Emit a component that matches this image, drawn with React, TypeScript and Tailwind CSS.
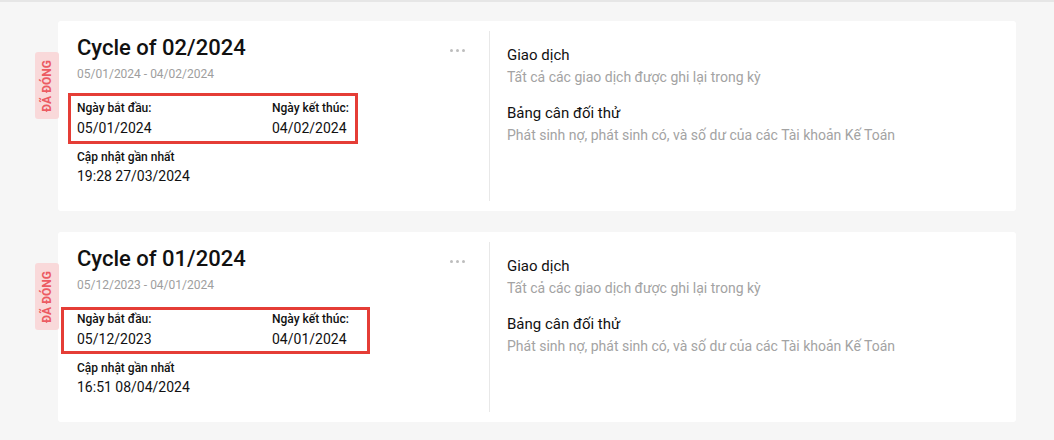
type Cycle = {
  title: string;
  range: string;
  start: string;
  end: string;
  updated: string;
  box: string;
};

const cycles: Cycle[] = [
  {
    title: 'Cycle of 02/2024',
    range: '05/01/2024 - 04/02/2024',
    start: '05/01/2024',
    end: '04/02/2024',
    updated: '19:28 27/03/2024',
    box: 'left-[10px] top-[72px] w-[290px] h-[51px]',
  },
  {
    title: 'Cycle of 01/2024',
    range: '05/12/2023 - 04/01/2024',
    start: '05/12/2023',
    end: '04/01/2024',
    updated: '16:51 08/04/2024',
    box: 'left-[3px] top-[75px] w-[309px] h-[47px]',
  },
];

function CycleCard({ c }: { c: Cycle }) {
  return (
    <div className="relative flex h-[190px] w-full rounded-[3px] bg-white">
      {/* badge trạng thái */}
      <div className="absolute -left-[23px] top-[31px] flex h-[67px] w-[24px] items-center justify-center rounded-[3px] bg-[#f9d9da]">
        <span className="-rotate-90 whitespace-nowrap text-[12px] font-bold text-[#ec5b62]">
          ĐÃ ĐÓNG
        </span>
      </div>

      {/* khung đỏ */}
      <div className={`pointer-events-none absolute border-[3px] border-[#e53d36] ${c.box}`} />

      <div className="relative w-[431px] shrink-0 pl-[19px] pt-[12px]">
        <div className="absolute right-[24px] top-[28px] flex gap-[3px]">
          <span className="h-[3px] w-[3px] rounded-full bg-[#bdbdbd]" />
          <span className="h-[3px] w-[3px] rounded-full bg-[#bdbdbd]" />
          <span className="h-[3px] w-[3px] rounded-full bg-[#bdbdbd]" />
        </div>
        <h2 className="text-[22px] font-medium leading-[30px] text-[#111]">{c.title}</h2>
        <p className="mt-[3px] text-[12px] leading-[16px] text-[#9e9e9e]">{c.range}</p>

        <div className="mt-[18px] flex">
          <div className="w-[195px]">
            <p className="text-[12px] font-medium leading-[16px] text-[#111]">Ngày bắt đầu:</p>
            <p className="mt-[2px] text-[14px] leading-[20px] text-[#111]">{c.start}</p>
          </div>
          <div>
            <p className="text-[12px] font-medium leading-[16px] text-[#111]">Ngày kết thúc:</p>
            <p className="mt-[2px] text-[14px] leading-[20px] text-[#111]">{c.end}</p>
          </div>
        </div>

        <p className="mt-[11px] text-[12px] font-medium leading-[16px] text-[#111]">Cập nhật gần nhất</p>
        <p className="mt-[1px] text-[14px] leading-[20px] text-[#111]">{c.updated}</p>
      </div>

      <div className="my-[10px] w-px bg-[#e8e8e8]" />

      <div className="pl-[17px] pt-[24px]">
        <p className="text-[15px] leading-[20px] text-[#111]">Giao dịch</p>
        <p className="mt-[3px] text-[14px] leading-[18px] text-[#a3a3a3]">
          Tất cả các giao dịch được ghi lại trong kỳ
        </p>
        <p className="mt-[17px] text-[15px] leading-[20px] text-[#111]">Bảng cân đối thử</p>
        <p className="mt-[3px] text-[14px] leading-[18px] text-[#a3a3a3]">
          Phát sinh nợ, phát sinh có, và số dư của các Tài khoản Kế Toán
        </p>
      </div>
    </div>
  );
}

export default function App() {
  return (
    <div
      className="min-h-[440px] border-t-2 border-[#e6e6e6] bg-[#f6f6f6] pb-[17px] pl-[58px] pr-[38px] pt-[19px]"
      style={{ fontFamily: 'Roboto, "Noto Sans", sans-serif' }}
    >
      <div className="flex flex-col gap-[21px]">
        {cycles.map((c) => (
          <CycleCard key={c.title} c={c} />
        ))}
      </div>
    </div>
  );
}
